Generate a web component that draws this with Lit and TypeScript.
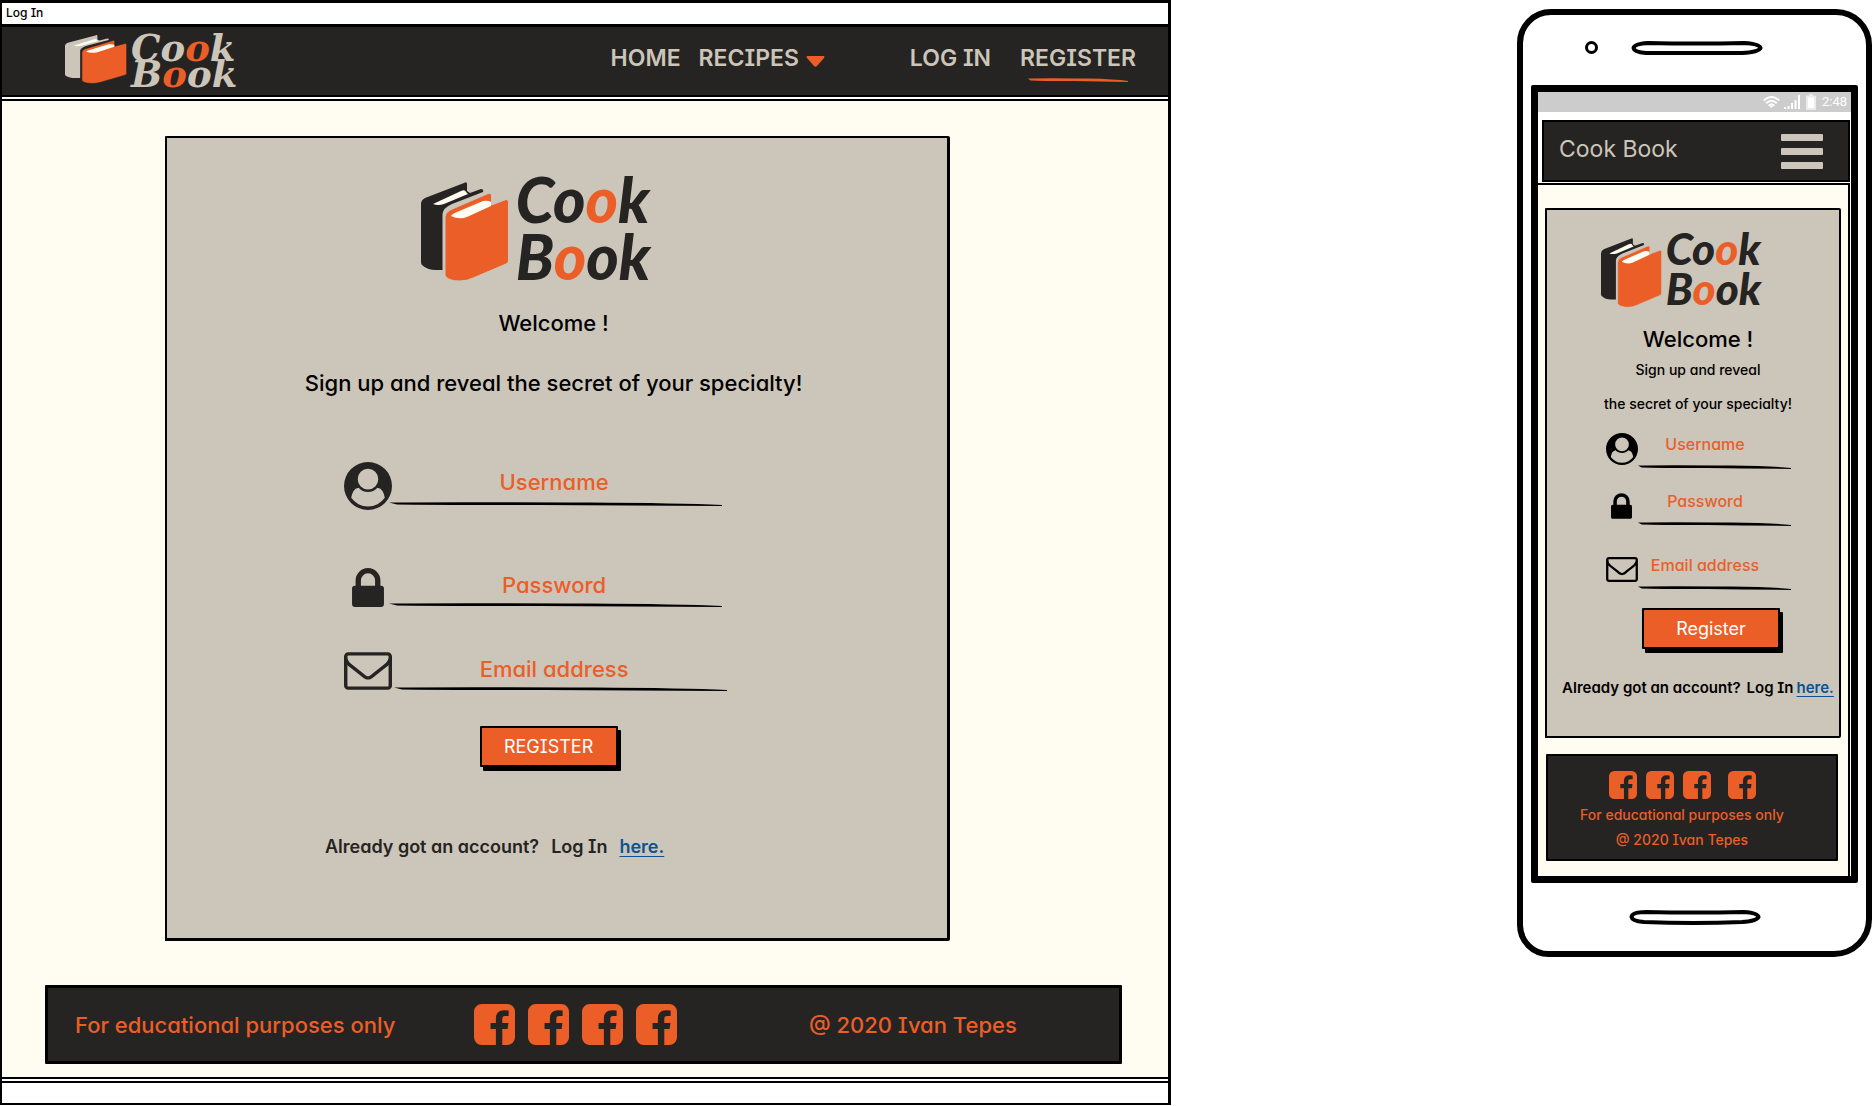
import { LitElement, html, css, svg } from "lit";
import { customElement } from "lit/decorators.js";

type Icon = { box: string; path: string; kind: string };

const ICONS: Record<string, Icon> = {
  user: {
    kind: "user",
    box: "0 0 1792 1792",
    path: "M1523 1339q-22-155-87.5-257.5T1251 963q-67 74-159.5 115.5T896 1120t-195.5-41.5T541 963q-119 16-184.5 118.5T269 1339q106 150 271 237.5t356 87.5 356-87.5 271-237.5zm-243-699q0-159-112.5-271.5T896 256 624.5 368.5 512 640t112.5 271.5T896 1024t271.5-112.5T1280 640zm512 256q0 182-71 347.5t-190.5 286T1245 1721t-349 71q-182 0-348-71t-286-191-191-286T0 896t71-348 191-286T548 71 896 0t348 71 286 191 191 286 71 348z",
  },
  lock: {
    kind: "lock",
    box: "0 128 1152 1408",
    path: "M320 768h512V576q0-106-75-181t-181-75-181 75-75 181v192zm832 96v576q0 40-28 68t-68 28H96q-40 0-68-28t-28-68V864q0-40 28-68t68-28h32V576q0-184 132-316t316-132 316 132 132 316v192h32q40 0 68 28t28 68z",
  },
  mail: {
    kind: "mail",
    box: "0 256 1792 1408",
    path: "M1664 1504V736q-32 36-69 66-268 206-426 338-51 43-83 67t-86.5 48.5T897 1280h-2q-48 0-102.5-24.5T706 1207t-83-67q-158-132-426-338-37-30-69-66v768q0 13 9.5 22.5t22.5 9.5h1472q13 0 22.5-9.5t9.5-22.5zm0-1051v-24.5l-.5-13-3-12.5-5.5-9-9-7.5-14-2.5H160q-13 0-22.5 9.5T128 416q0 168 147 284 193 152 401 317 6 5 35 29.5t46 37.5 44.5 31.5T852 1143t43 9h2q20 0 43-9t50.5-27.5 44.5-31.5 46-37.5 35-29.5q208-165 401-317 54-43 100.5-115.5T1664 453zm128-37v1088q0 66-47 113t-113 47H160q-66 0-113-47T0 1504V416q0-66 47-113t113-47h1472q66 0 113 47t47 113z",
  },
};

const FACEBOOK =
  "M1248 128q119 0 203.5 84.5T1536 416v960q0 119-84.5 203.5T1248 1664h-188v-595h199l30-232h-229V689q0-56 23.5-84t91.5-28l122-1V369q-63-9-178-9-136 0-217.5 80T820 666v171H620v232h200v595H288q-119 0-203.5-84.5T0 1376V416q0-119 84.5-203.5T288 128h960z";

const FIELDS = [
  { name: "username", text: "Username", type: "text", icon: ICONS.user },
  { name: "password", text: "Password", type: "password", icon: ICONS.lock },
  { name: "email", text: "Email address", type: "email", icon: ICONS.mail },
];

const books = svg`
  <path class="back" d="M0 22Q0 18 4 16L43 1Q46 -1 46 2V9L49 11L60 7Q63 7 62 10L31 22Q22 26 21.500 32V88H15Q6 88 1 83Q0 82 0 80Z"/>
  <path class="pages" d="M12 22L40 9Q44 7 45 10L47 12L23 22Q17 24 12 22Z"/>
  <path class="front" d="M24 35Q24 31 29 28L66 12Q70 10 70.500 13V23L85 17.500Q87.500 17 87.500 20V79Q87.500 81 85 82L52 96Q46 99 39 99Q29 99 25 95Q24 94 24 92Z"/>
  <path class="pages" d="M30 34Q31 32 36 30L62 19Q67 18 70 20V24L46 35Q38 38 30 34Z"/>`;

const logo = (variant: string) => html`
  <div class="logo ${variant}">
    <svg class="books" viewBox="0 0 88 100" preserveAspectRatio="none" aria-hidden="true">${books}</svg>
    <div class="wordmark">
      <span class="word">Co<em>o</em>k</span>
      <span class="word">B<em>o</em>ok</span>
    </div>
  </div>`;

const stroke = (cls: string) => html`
  <svg class=${cls} viewBox="0 0 333 4" preserveAspectRatio="none" aria-hidden="true">
    <path d="M0 0.500Q60 0 200 0.500Q290 1 333 3V4Q240 3.500 150 3Q40 3 8 2.500Z" />
  </svg>`;

const field = (prefix: string, f: (typeof FIELDS)[number]) => html`
  <div class="field ${f.icon.kind}">
    <label class="icon" for="${prefix}-${f.name}" aria-label=${f.text}>
      <svg viewBox=${f.icon.box} aria-hidden="true"><path d=${f.icon.path} /></svg>
    </label>
    <div class="entry">
      <input id="${prefix}-${f.name}" name=${f.name} type=${f.type} placeholder=${f.text} autocomplete="off" />
      ${stroke("rule")}
    </div>
  </div>`;

const socials = html`
  <div class="socials">
    ${[0, 1, 2, 3].map(
      () => html`<a class="social" href="#facebook" aria-label="Facebook">
        <svg viewBox="0 128 1536 1536" aria-hidden="true"><path d=${FACEBOOK} /></svg>
      </a>`,
    )}
  </div>`;

const signup = (prefix: string, title: unknown, action: string) => html`
  <section class="card">
    ${logo("script")}
    <h1 class="welcome">Welcome !</h1>
    <p class="lead">${title}</p>
    <form class="form" @submit=${(e: Event) => e.preventDefault()}>
      ${FIELDS.map((f) => field(prefix, f))}
      <div class="actions"><button class="submit" type="submit">${action}</button></div>
    </form>
    <p class="account">
      <span class="question">Already got an account?</span>
      <span class="login">Log In</span>
      <a class="here" href="#login">here.</a>
    </p>
  </section>`;

@customElement("app-root")
export class AppRoot extends LitElement {
  static styles = css`
    :host {
      --ink: #252422;
      --sand: #ccc5b9;
      --cream: #fffcf2;
      --orange: #eb5e28;
      display: block;
      background: #fff;
      color: #000;
      font-family: Inter, "Liberation Sans", sans-serif;
      font-feature-settings: "cv11", "cv08";
      font-size: 22px;
      font-weight: 500;
      line-height: 32px;
    }
    * { box-sizing: border-box; }
    h1, p { margin: 0; font: inherit; }
    svg { display: block; fill: currentColor; overflow: visible; }
    a { color: inherit; text-decoration: none; }

    .board {
      display: grid;
      grid-template-columns: minmax(0, 1fr) 355px;
      gap: 346px;
      align-items: start;
    }

    /* Browser window */
    .window { border: 2px solid #000; border-right-width: 3px; border-top-width: 3px; }
    .titlebar { height: 21px; padding: 0 4px; font-size: 12px; line-height: 20px; }
    .navbar {
      display: flex;
      align-items: flex-start;
      height: 73px;
      padding: 0 32px 0 63px;
      border: solid #000;
      border-width: 3px 0 2px;
      background: var(--ink);
      color: var(--sand);
    }
    .menu {
      display: flex;
      align-items: flex-start;
      gap: 18px;
      margin-left: auto;
      padding-top: 15px;
      font-size: 23px;
      font-weight: 600;
    }
    .dropdown { display: flex; align-items: center; gap: 7px; margin-right: 67px; }
    .caret { width: 19px; height: 11px; margin-top: 6px; fill: var(--orange); }
    .active { display: grid; gap: 4px; justify-items: center; margin-left: 11px; }
    .underline { width: 100px; height: 4px; fill: var(--orange); }
    .page {
      margin-top: 2px;
      padding: 35px 0 13px;
      border: solid #000;
      border-width: 2px 0;
      background: var(--cream);
    }
    .statusline { height: 22px; margin-top: 2px; border-top: 2px solid #000; }

    /* Logo */
    .logo { display: flex; color: var(--ink); }
    .books { flex: none; }
    .back { fill: currentColor; }
    .front { fill: var(--orange); stroke: var(--sand); stroke-width: 1; }
    .pages { fill: var(--cream); }
    .wordmark { display: grid; }
    .word { white-space: nowrap; }
    .word em { font-style: inherit; color: var(--orange); }
    .classic { gap: 4px; padding-top: 8px; color: var(--sand); }
    .classic .books { width: 62px; height: 49px; }
    .classic .front { stroke: var(--ink); }
    .classic .wordmark { font: italic 700 37px/26px "DejaVu Serif", serif; }
    .script .wordmark { font: italic 900 62px/56px Lato, sans-serif; }

    /* Sign-up card */
    .card {
      display: flex;
      flex-direction: column;
      align-items: center;
      margin: 0 18.7% 0 14%;
      padding: 33px 43px 75px 0;
      border: 2px solid #000;
      border-right-width: 3px;
      border-bottom-width: 3px;
      border-radius: 1px 2px 2px 0;
      background: var(--sand);
    }
    .script { gap: 7px; height: 114px; }
    .script .books { width: 88px; height: 100px; margin-top: 11px; }
    .welcome { margin-top: 22px; padding-left: 36px; }
    .lead { margin-top: 28px; padding-left: 36px; white-space: nowrap; }
    .form { width: 384px; margin-top: 63px; }
    .field { display: grid; grid-template-columns: 45px 333px; height: 48px; }
    .field.lock { margin-top: 53px; }
    .field.mail { grid-template-columns: 50px 333px; margin-top: 36px; }
    .icon { display: grid; place-items: center; width: 48px; height: 48px; color: var(--ink); }
    .user svg { width: 48px; height: 48px; }
    .lock svg.rule, .user svg.rule, .mail svg.rule { width: 100%; height: 4px; fill: #000; }
    .lock .icon svg { width: 32px; height: 39px; }
    .mail .icon svg { width: 48px; height: 38px; }
    .entry { display: grid; align-content: start; }
    input {
      width: 100%;
      height: 40px;
      margin: 0;
      padding: 4px 2px 0 0;
      border: 0;
      outline: 0;
      background: none;
      color: var(--orange);
      font: inherit;
      font-feature-settings: inherit;
      text-align: center;
    }
    input::placeholder { color: var(--orange); opacity: 1; }
    input[type="text"] { padding-top: 0; }
    input[type="email"] { padding-right: 12px; }
    .actions { display: grid; justify-content: center; margin-top: 31px; padding-left: 26px; }
    .submit {
      width: 138px;
      height: 41px;
      padding: 0;
      border: 2px solid #000;
      border-radius: 1px;
      background: var(--orange);
      box-shadow: 3px 4px 0 #000;
      color: #fff;
      font: inherit;
      font-feature-settings: inherit;
      font-size: 18px;
      font-weight: 400;
    }
    .account {
      display: flex;
      margin-top: 64px;
      padding-right: 82px;
      color: var(--ink);
      font-size: 18px;
      font-weight: 600;
      white-space: nowrap;
    }
    .login { margin-left: 12px; }
    .here {
      margin-left: 12px;
      color: #0b5394;
      text-decoration: underline;
      text-decoration-thickness: 1px;
      text-underline-offset: 3px;
    }

    /* Footer */
    .footer {
      display: grid;
      grid-template-columns: 382fr 321fr 297fr;
      align-items: center;
      height: 79px;
      margin: 44px 46px 0 43px;
      padding-left: 27px;
      border: 3px solid #000;
      border-radius: 1px;
      background: var(--ink);
      color: var(--orange);
    }
    .footer p { white-space: nowrap; }
    .socials { display: flex; gap: 13px; }
    .social svg { width: 41px; height: 41px; }

    /* Phone */
    .phone { margin-top: 9px; border: 6px solid #000; border-radius: 34px 36px 38px 32px; }
    .earpiece { display: flex; align-items: center; gap: 34px; height: 70px; padding: 0 0 5px 62px; }
    .camera { width: 13px; height: 13px; border: 3px solid #000; border-radius: 50%; }
    .slot { width: 130px; height: 14px; fill: none; stroke: #000; stroke-width: 4; }
    .chin { display: grid; place-items: center; height: 68px; }
    .screen { margin: 0 8px; border: 7px solid #000; border-radius: 2px; }
    .status {
      display: flex;
      align-items: center;
      justify-content: flex-end;
      gap: 4px;
      height: 20px;
      padding-right: 4px;
      background: #ccc;
      color: #fff;
      font: 400 13px/20px Roboto, sans-serif;
    }
    .wifi { width: 17px; height: 12px; }
    .bars { width: 16px; height: 14px; }
    .battery { width: 10px; height: 16px; margin: 0 2px; }
    .appbar {
      display: flex;
      align-items: center;
      justify-content: space-between;
      height: 62px;
      margin: 8px 1px 0 4px;
      padding: 0 25px 0 15px;
      border: 2px solid #000;
      background: var(--ink);
      color: var(--sand);
    }
    .brand { padding-bottom: 4px; font-size: 23px; font-weight: 400; }
    .burger {
      display: grid;
      gap: 7px;
      width: 42px;
      padding: 0;
      border: 0;
      background: none;
    }
    .burger span { height: 7px; border-radius: 1px; background: var(--sand); }
    .phone .page {
      margin: 1px 1px 0 0;
      padding: 23px 7px 15px;
      border-width: 2px 2px 0 0;
    }
    .phone .card { margin: 0; padding: 19px 0 36px 10px; border-width: 2px; }
    .phone .script { gap: 4px; height: 80px; padding-right: 34px; }
    .phone .script .books { width: 61px; height: 70px; margin-top: 9px; }
    .phone .script .wordmark { font-size: 44px; line-height: 39px; }
    .phone .welcome { margin-top: 16px; padding: 0; line-height: 28px; }
    .phone .lead { display: grid; margin: 0; padding: 0; font-size: 14px; line-height: 34px; text-align: center; }
    .phone .form { width: 185px; margin-top: 10px; }
    .phone .field { grid-template-columns: 32px 153px; height: 37px; }
    .phone .field.lock { margin-top: 20px; }
    .phone .field.mail { margin-top: 27px; }
    .phone .icon { width: 32px; height: 35px; color: #000; }
    .phone .user .icon svg { width: 32px; height: 32px; }
    .phone .lock .icon svg { width: 21px; height: 26px; }
    .phone .mail .icon svg { width: 32px; height: 25px; }
    .phone input { height: 34px; padding: 0 18px 8px 0; font-size: 16px; line-height: 24px; }
    .phone .actions { margin-top: 19px; }
    .phone .account { margin-top: 27px; padding: 0; color: #000; font-size: 15px; line-height: 24px; }
    .phone .question, .phone .login { font-weight: 600; }
    .phone .login { margin-left: 6px; }
    .phone .here { margin-left: 3px; }
    .phone .footer {
      grid-template-columns: 1fr;
      justify-items: center;
      align-content: start;
      height: auto;
      margin: 16px 3px 0 1px;
      padding: 15px 20px 7px 0;
      border-width: 2px;
      font-size: 14px;
      line-height: 25px;
    }
    .phone .socials { gap: 9px; order: -1; margin-bottom: 3px; }
    .phone .social:last-child { margin-left: 8px; }
    .phone .social svg { width: 28px; height: 28px; }
  `;

  render() {
    return html`
      <main class="board">
        <div class="window">
          <div class="titlebar">Log In</div>
          <header class="navbar">
            ${logo("classic")}
            <nav class="menu">
              <a href="#home">HOME</a>
              <a class="dropdown" href="#recipes">RECIPES
                <svg class="caret" viewBox="0 0 19 11" aria-hidden="true">
                  <path d="M1 0H18Q19 1 18 2L11 10Q9.500 11.500 8 10L1 2Q0 1 1 0Z" />
                </svg>
              </a>
              <a href="#login">LOG IN</a>
              <a class="active" href="#register">REGISTER ${stroke("underline")}</a>
            </nav>
          </header>
          <div class="page">
            ${signup("desktop", "Sign up and reveal the secret of your specialty!", "REGISTER")}
            <footer class="footer">
              <p>For educational purposes only</p>
              ${socials}
              <p>@ 2020 Ivan Tepes</p>
            </footer>
          </div>
          <div class="statusline"></div>
        </div>

        <div class="phone">
          <div class="earpiece">
            <span class="camera"></span>
            <svg class="slot" viewBox="0 0 130 14" aria-hidden="true">
              <path d="M16 2Q64 3 112 2Q128 3 128.500 7Q127 11 110 12H14Q2 11 1.500 7Q2 3 16 2Z" />
            </svg>
          </div>
          <div class="screen">
            <div class="status">
              <svg class="wifi" viewBox="0 0 17 12" aria-hidden="true">
                <path fill="none" stroke="currentColor" stroke-width="2" d="M.7 4.500Q8.500-2.500 16.300 4.500M3.200 7.200Q8.500 2.300 13.800 7.200M5.700 9.700Q8.500 7 11.300 9.700" />
                <path d="M7 10.500Q8.500 9 10 10.500L8.500 12Z" />
              </svg>
              <svg class="bars" viewBox="0 0 16 14" aria-hidden="true">
                <path d="M0 12h2v2H0zM3.500 11h2v3h-2zM7 8h2v6H7zM10.500 5h2v9h-2zM14 0h2v14h-2z" />
              </svg>
              <svg class="battery" viewBox="0 0 10 16" aria-hidden="true">
                <path fill-opacity=".6" d="M3 0h4v1.500h2q1 0 1 1V15q0 1-1 1H1q-1 0-1-1V2.500q0-1 1-1h2z" />
                <path d="M2 3.500h6V14H2z" />
              </svg>
              <span>2:48</span>
            </div>
            <header class="appbar">
              <span class="brand">Cook Book</span>
              <button class="burger" type="button" aria-label="Menu">
                <span></span><span></span><span></span>
              </button>
            </header>
            <div class="page">
              ${signup("phone", html`<span>Sign up and reveal</span><span>the secret of your specialty!</span>`, "Register")}
              <footer class="footer">
                <p>For educational purposes only</p>
                ${socials}
                <p>@ 2020 Ivan Tepes</p>
              </footer>
            </div>
          </div>
          <div class="chin">
            <svg class="slot" viewBox="0 0 130 14" aria-hidden="true">
              <path d="M16 2Q64 3 114 2Q128 3 128.500 7Q127 11 112 12Q64 14 14 12Q2 11 1.500 7Q2 2 16 2Z" />
            </svg>
          </div>
        </div>
      </main>
    `;
  }
}
